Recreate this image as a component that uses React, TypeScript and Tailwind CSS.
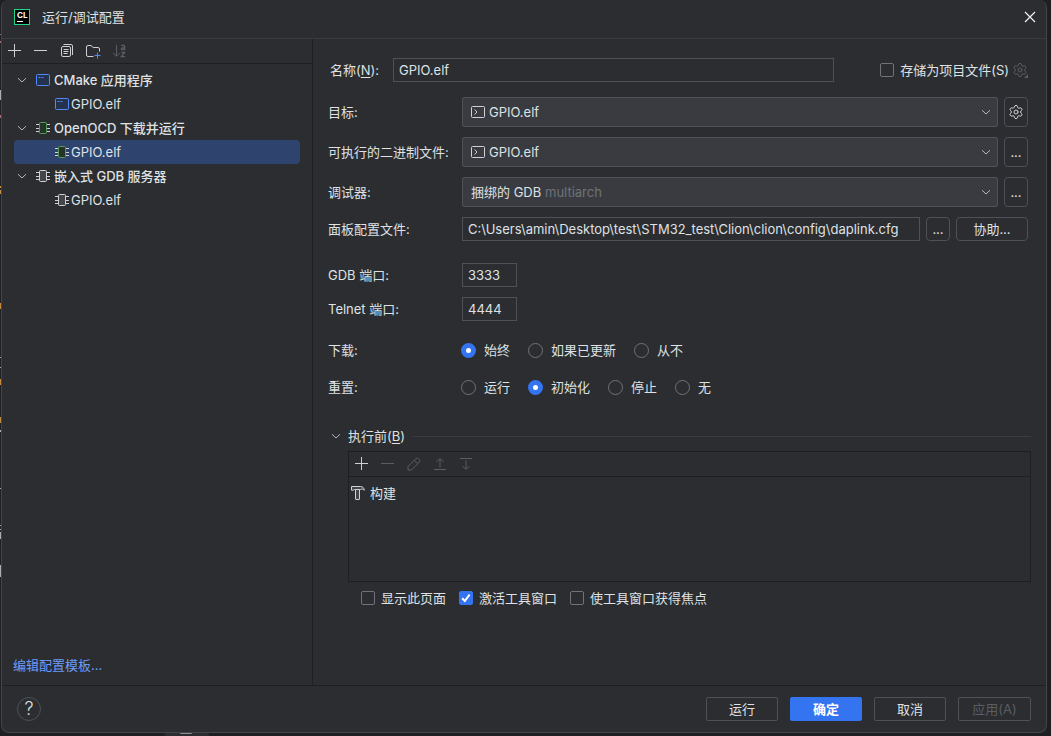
import type { ButtonHTMLAttributes, InputHTMLAttributes, ReactNode } from "react";
import { Settings } from "lucide-react";

type ChipTone = "green" | "gray";

function ChevronDown() {
  return (
    <svg className="size-4 shrink-0" viewBox="0 0 16 16" fill="none" stroke="#b4b8bf" aria-hidden="true">
      <path d="M4 6.2l4 3.8 4-3.8" />
    </svg>
  );
}

function WindowIcon() {
  return (
    <svg className="size-4 shrink-0" viewBox="0 0 16 16" fill="none" aria-hidden="true">
      <rect x="1.5" y="2.5" width="13" height="11" rx="1" fill="#25324d" stroke="#548af7" />
      <path d="M3.5 5.5h2M6.5 5.5h2" stroke="#548af7" />
    </svg>
  );
}

function ChipIcon({ tone }: { tone: ChipTone }) {
  const green = tone === "green";
  return (
    <svg className="size-4 shrink-0" viewBox="0 0 16 16" fill="none" aria-hidden="true">
      <path d="M1 4.5h3M1 8.5h3M1 11.5h3M12 4.5h3M12 8.5h3M12 11.5h3" stroke="#ced0d6" />
      <rect
        x="4.5"
        y="2.5"
        width="7"
        height="11"
        rx="1"
        fill={green ? "#253627" : "#43454a"}
        stroke={green ? "#57965c" : "#ced0d6"}
      />
    </svg>
  );
}

function TerminalIcon() {
  return (
    <svg className="size-4 shrink-0" viewBox="0 0 16 16" fill="none" stroke="#ced0d6" aria-hidden="true">
      <rect x="1.5" y="2.5" width="13" height="11" rx="1" />
      <path d="M4.5 5.5L7 8l-2.5 2.5" />
    </svg>
  );
}

function PlusIcon() {
  return (
    <svg className="size-4" viewBox="0 0 16 16" stroke="#ced0d6" aria-hidden="true">
      <path d="M7.5 1v13M1 7.5h13" />
    </svg>
  );
}

function MinusIcon({ disabled = false }: { disabled?: boolean }) {
  return (
    <svg className="size-4" viewBox="0 0 16 16" stroke={disabled ? "#5a5d63" : "#ced0d6"} aria-hidden="true">
      <path d="M1 7.5h13" />
    </svg>
  );
}

function CopyIcon() {
  return (
    <svg className="size-4" viewBox="0 0 16 16" fill="none" stroke="#ced0d6" aria-hidden="true">
      <rect x="2.5" y="3.5" width="9" height="10" rx="1.5" />
      <path d="M4.5 6.5h5M4.5 8.5h5M4.5 10.5h4" />
      <path d="M4.5 1.5H12A1.5 1.5 0 0 1 13.5 3V12" />
    </svg>
  );
}

function NewFolderIcon() {
  return (
    <svg className="size-4" viewBox="0 0 16 16" fill="none" aria-hidden="true">
      <path
        d="M8.5 13.5H3A1.5 1.5 0 0 1 1.5 12V4A1.5 1.5 0 0 1 3 2.5H6L8.2 4.5H13A1.5 1.5 0 0 1 14.5 6V8.5"
        stroke="#ced0d6"
      />
      <path d="M12.5 9.5v6M9.5 12.5h6" stroke="#548af7" />
    </svg>
  );
}

function SortIcon() {
  return (
    <svg className="size-4" viewBox="0 0 16 16" fill="none" stroke="#5a5d63" aria-hidden="true">
      <path d="M5.5 2v11M2 9.8l3.5 3.5L9 9.8" />
      <g strokeWidth="1.3">
        <path d="M10.6 3.2C10.8 2 13.6 1.8 13.6 3.4V7M13.6 4.6C9.8 4.4 9.8 6.6 11.4 6.6C12.6 6.6 13.6 6 13.6 5.2" />
        <path d="M10.4 9.5H13.6L10.4 13.6H14" />
      </g>
    </svg>
  );
}

function PencilIcon() {
  return (
    <svg className="size-4" viewBox="0 0 16 16" fill="none" stroke="#5a5d63" aria-hidden="true">
      <path d="M2 10.5L10 2.6A1.7 1.7 0 0 1 12.4 2.6L13.4 3.6A1.7 1.7 0 0 1 13.4 6L5.5 14H2ZM8.2 4.4l3.5 3.4" />
    </svg>
  );
}

function ArrowIcon({ direction }: { direction: "up" | "down" }) {
  return (
    <svg className="size-4" viewBox="0 0 16 16" fill="none" stroke="#5a5d63" aria-hidden="true">
      {direction === "up" ? (
        <path d="M2 13.5h12M8 11.5V3M4.5 6L8 2.5 11.5 6" />
      ) : (
        <path d="M2 2.5h12M8 4.5V13M4.5 10L8 13.5 11.5 10" />
      )}
    </svg>
  );
}

function HammerIcon() {
  return (
    <svg className="size-4 shrink-0" viewBox="0 0 16 16" fill="none" stroke="#ced0d6" aria-hidden="true">
      <path d="M1.5 1.5H10.5C12.8 1.6 14 2.8 14.3 5.2C12.8 3.9 11.5 3.7 10.5 4.5H4.5L3.5 5.2H1.5Z" fill="#43454a" />
      <path d="M5.5 4.5h4V14a.5.5 0 0 1-.5.5H6a.5.5 0 0 1-.5-.5Z" fill="#43454a" />
    </svg>
  );
}

function ToolButton({ label, disabled, children }: { label: string; disabled?: boolean; children: ReactNode }) {
  return (
    <button
      type="button"
      aria-label={label}
      disabled={disabled}
      className="flex h-6 w-[26px] items-center justify-center rounded enabled:hover:bg-[#393b40]"
    >
      {children}
    </button>
  );
}

function Button({ className = "", ...props }: ButtonHTMLAttributes<HTMLButtonElement>) {
  return (
    <button
      type="button"
      className={`flex shrink-0 items-center justify-center border border-[#4e5157] hover:bg-[#393b40] ${className}`}
      {...props}
    />
  );
}

function TextField({ className = "", ...props }: InputHTMLAttributes<HTMLInputElement>) {
  return (
    <input
      type="text"
      className={`h-6 min-w-0 border border-[#4e5157] bg-[#2b2d30] px-[5px] outline-none focus:border-[#3574f0] ${className}`}
      {...props}
    />
  );
}

function Checkbox({ label, checked = false }: { label: string; checked?: boolean }) {
  return (
    <label className="flex h-6 items-center gap-1.5">
      <span className="grid size-[14px]">
        <input
          type="checkbox"
          defaultChecked={checked}
          className="peer col-start-1 row-start-1 size-[14px] appearance-none rounded-xs border border-[#6f737a] checked:border-[#3574f0] checked:bg-[#3574f0]"
        />
        <svg
          className="pointer-events-none col-start-1 row-start-1 hidden size-[14px] peer-checked:block"
          viewBox="0 0 14 14"
          fill="none"
          stroke="white"
          strokeWidth="2"
          aria-hidden="true"
        >
          <path d="M3.2 7.3L5.8 10l4.8-6.4" />
        </svg>
      </span>
      {label}
    </label>
  );
}

function RadioRow({ title, name, options, value }: { title: string; name: string; options: string[]; value: string }) {
  return (
    <div role="radiogroup" aria-labelledby={`${name}-title`} className="flex h-6 items-center">
      <span id={`${name}-title`} className="w-[133px] shrink-0">
        {title}
      </span>
      <div className="flex gap-[18px]">
        {options.map((option) => (
          <label key={option} className="flex items-center gap-2">
            <input
              type="radio"
              name={name}
              defaultChecked={option === value}
              className="size-[15px] appearance-none rounded-full border border-[#6f737a] checked:border-5 checked:border-[#3574f0] checked:bg-white"
            />
            {option}
          </label>
        ))}
      </div>
    </div>
  );
}

function SelectRow({ id, label, value, hint, action }: { id: string; label: string; value: string; hint?: string; action: ReactNode }) {
  return (
    <div className="flex h-[30px] items-center">
      <label htmlFor={id} className="w-[134px] shrink-0">
        {label}
      </label>
      <div className="relative mr-1.5 h-full min-w-0 flex-1">
        <select
          id={id}
          className={`h-full w-full appearance-none rounded-xs border border-[#4e5157] bg-[#393b40] pr-7 outline-none ${hint ? "pl-2" : "pl-[26px]"}`}
        >
          <option>{value}</option>
        </select>
        <div className="pointer-events-none absolute inset-y-0 right-1 left-2 flex items-center justify-between">
          {hint ? <span className="pl-[75px] text-[#6f737a]">{hint}</span> : <TerminalIcon />}
          <ChevronDown />
        </div>
      </div>
      {action}
    </div>
  );
}

function TreeGroup({ title, icon, selected }: { title: string; icon: ReactNode; selected?: boolean }) {
  return (
    <li>
      <div className="flex h-6 items-center gap-[3px] font-medium">
        <span className="flex gap-[5px]">
          <ChevronDown />
          {icon}
        </span>
        {title}
      </div>
      <div className={`flex h-6 items-center gap-px rounded pl-10 ${selected ? "bg-[#2e436e]" : ""}`}>
        {icon}
        GPIO.elf
      </div>
    </li>
  );
}

function Sidebar() {
  return (
    <aside className="flex w-[311px] shrink-0 flex-col border-r border-[#1e1f22]">
      <div className="flex h-[25px] border-b border-[#1e1f22]">
        <ToolButton label="添加"><PlusIcon /></ToolButton>
        <ToolButton label="移除"><MinusIcon /></ToolButton>
        <ToolButton label="复制"><CopyIcon /></ToolButton>
        <ToolButton label="新建文件夹"><NewFolderIcon /></ToolButton>
        <ToolButton label="排序" disabled><SortIcon /></ToolButton>
      </div>
      <ul className="mx-3 flex-1 pt-1">
        <TreeGroup title="CMake 应用程序" icon={<WindowIcon />} />
        <TreeGroup title="OpenOCD 下载并运行" icon={<ChipIcon tone="green" />} selected />
        <TreeGroup title="嵌入式 GDB 服务器" icon={<ChipIcon tone="gray" />} />
      </ul>
      <div className="flex h-10 items-center px-[11px]">
        <a href="#templates" className="text-[#6b9bfa]">编辑配置模板...</a>
      </div>
    </aside>
  );
}

function ConfigForm() {
  return (
    <div className="pr-[3px]">
      <div className="flex h-6 items-center">
        <label htmlFor="name" className="w-[65px] shrink-0 pl-0.5">
          名称(<u className="underline-offset-2">N</u>):
        </label>
        <TextField id="name" defaultValue="GPIO.elf" className="mr-[46px] flex-1" />
        <Checkbox label="存储为项目文件(S)" />
        <button type="button" aria-label="存储选项" disabled className="ml-[3px] flex">
          <Settings className="size-4 text-[#5a5d63]" strokeWidth={1.5} />
          <svg className="-ml-1 size-1 self-end" viewBox="0 0 4 4" fill="#5a5d63" aria-hidden="true">
            <path d="M4 0v4H0z" />
          </svg>
        </button>
      </div>

      <div className="mt-[15px] flex flex-col gap-2.5">
        <SelectRow
          id="target"
          label="目标:"
          value="GPIO.elf"
          action={
            <Button aria-label="目标设置" className="h-full w-6 rounded">
              <Settings className="size-4 shrink-0 text-[#ced0d6]" strokeWidth={1.5} />
            </Button>
          }
        />
        <SelectRow
          id="binary"
          label="可执行的二进制文件:"
          value="GPIO.elf"
          action={<Button className="h-full w-6 rounded">...</Button>}
        />
        <SelectRow
          id="debugger"
          label="调试器:"
          value="捆绑的 GDB"
          hint="multiarch"
          action={<Button className="h-full w-6 rounded">...</Button>}
        />
        <div className="flex h-6 items-center">
          <label htmlFor="board" className="w-[134px] shrink-0">面板配置文件:</label>
          <div className="flex min-w-0 flex-1 gap-1.5">
            <TextField
              id="board"
              defaultValue="C:\Users\amin\Desktop\test\STM32_test\Clion\clion\config\daplink.cfg"
              className="flex-1"
            />
            <Button className="h-6 w-6 rounded">...</Button>
            <Button className="h-6 w-[72px] rounded">协助...</Button>
          </div>
        </div>
      </div>

      <div className="mt-[22px] flex flex-col gap-2.5">
        <div className="flex items-center">
          <label htmlFor="gdb-port" className="w-[134px] shrink-0">GDB 端口:</label>
          <TextField id="gdb-port" defaultValue="3333" className="w-[55px]" />
        </div>
        <div className="flex items-center">
          <label htmlFor="telnet-port" className="w-[134px] shrink-0">Telnet 端口:</label>
          <TextField id="telnet-port" defaultValue="4444" className="w-[55px]" />
        </div>
      </div>

      <div className="mt-[17px] flex flex-col gap-[13px]">
        <RadioRow title="下载:" name="download" options={["始终", "如果已更新", "从不"]} value="始终" />
        <RadioRow title="重置:" name="reset" options={["运行", "初始化", "停止", "无"]} value="初始化" />
      </div>
    </div>
  );
}

function BeforeLaunch() {
  return (
    <section className="mt-[25px]">
      <div className="flex h-6 items-center">
        <button type="button" className="flex shrink-0 items-center gap-1">
          <ChevronDown />
          <span>
            执行前(<u className="underline-offset-2">B</u>)
          </span>
        </button>
        <div className="ml-2 h-px flex-1 bg-[#393b40]" />
      </div>
      <div className="mt-[3px] ml-5 border border-[#1e1f22]">
        <div className="flex h-[25px] border-b border-[#1e1f22]">
          <ToolButton label="添加任务"><PlusIcon /></ToolButton>
          <ToolButton label="移除任务" disabled><MinusIcon disabled /></ToolButton>
          <ToolButton label="编辑任务" disabled><PencilIcon /></ToolButton>
          <ToolButton label="上移" disabled><ArrowIcon direction="up" /></ToolButton>
          <ToolButton label="下移" disabled><ArrowIcon direction="down" /></ToolButton>
        </div>
        <ul className="min-h-[104px] px-px pt-1">
          <li className="flex h-6 items-center gap-1">
            <HammerIcon />
            构建
          </li>
        </ul>
      </div>
      <div className="mt-1 ml-[33px] flex flex-wrap gap-x-[13px]">
        <Checkbox label="显示此页面" />
        <Checkbox label="激活工具窗口" checked />
        <Checkbox label="使工具窗口获得焦点" />
      </div>
    </section>
  );
}

// Slivers of the editor that show past the dialog's edges
function EditorBackdrop() {
  return (
    <>
      <svg className="absolute top-0 left-0 h-[736px] w-0.5" viewBox="0 0 2 736" aria-hidden="true">
        <path d="M0 34h2v1H0zM0 41h2v2H0zM0 115h1v3H0z" fill="#a96b70" />
        <path d="M0 186h1v2H0zM0 190h1v4H0zM0 303h1v6H0zM0 379h1v6H0zM0 417h1v6H0z" fill="#c28d43" />
        <path
          d="M0 90h1v10H0zM0 357h2v1H0zM0 367h2v1H0zM0 430h1v2H0zM1 434h1v1H1zM0 488h2v1H0zM0 525h2v1H0zM0 529h2v1H0zM0 532h1v7H0zM0 565h1v12H0z"
          fill="#a9adb4"
        />
      </svg>
      <svg className="absolute bottom-0 left-[165px] h-1 w-11" viewBox="0 0 44 4" aria-hidden="true">
        <rect width="44" height="4" fill="#2b2d30" />
        <rect x="15" width="12" height="2" rx="1" fill="#8b8e94" />
      </svg>
    </>
  );
}

export default function App() {
  return (
    <div className="relative flex min-h-screen bg-[#1e1f22] pr-1 pb-[3px] pl-px font-[Inter,'Noto_Sans_CJK_SC',sans-serif] text-[13px] leading-5 text-[#dfe1e5]">
      <EditorBackdrop />
      <div className="relative flex min-w-0 flex-1 flex-col rounded-lg border border-t-0 border-[#43454a] bg-[#2b2d30]">
        <header className="flex h-[39px] items-center border-b border-[#393b40] pr-2 pb-1 pl-3">
          <div className="flex size-4 flex-col justify-between border border-[#21d789] bg-black px-0.5 pb-0.5 font-bold text-white">
            <span className="text-[8px] leading-[10px]">CL</span>
            <span className="h-px w-1.5 bg-white" />
          </div>
          <h1 className="ml-3 flex-1">运行/调试配置</h1>
          <button type="button" aria-label="关闭" className="flex size-4 items-center justify-center">
            <svg className="size-4" viewBox="0 0 16 16" stroke="#f0f1f2" strokeWidth="1.2" aria-hidden="true">
              <path d="M3 3l10 10M13 3L3 13" />
            </svg>
          </button>
        </header>
        <div className="flex flex-1">
          <Sidebar />
          <main className="min-w-0 flex-1 px-[15px] pt-[19px]">
            <ConfigForm />
            <BeforeLaunch />
          </main>
        </div>
        <footer className="flex h-[47px] shrink-0 items-center gap-3 border-t border-[#1e1f22] px-[15px]">
          <Button aria-label="帮助" className="mr-auto size-6 rounded-full text-lg leading-5 font-light">?</Button>
          <Button className="h-6 w-[72px] rounded-xs">运行</Button>
          <button type="submit" className="h-6 w-[72px] rounded-xs bg-[#3574f0] font-semibold text-white hover:bg-[#4682fa]">
            确定
          </button>
          <Button className="h-6 w-[72px] rounded-xs">取消</Button>
          <Button className="h-6 w-[73px] rounded-xs text-[#5a5d63]" disabled>应用(A)</Button>
        </footer>
      </div>
    </div>
  );
}
